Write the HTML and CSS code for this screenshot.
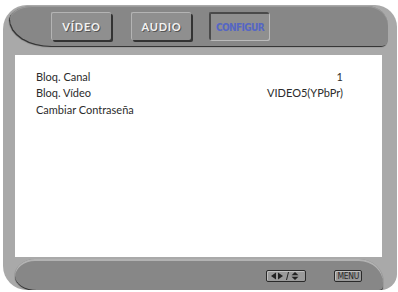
FILE: index.html
```html
<!DOCTYPE html>
<html lang="es">
<head>
  <meta charset="UTF-8">
  <title>Configur</title>
  <link rel="stylesheet" href="styles.css">
</head>
<body>

<div class="tv">
  <div class="topbar">
    <div class="tab">VÍDEO</div>
    <div class="tab">AUDIO</div>
    <div class="tab active">CONFIGUR</div>
  </div>

  <div class="screen">
    <div class="row"><span>Bloq. Canal</span><span>1</span></div>
    <div class="row"><span>Bloq. Vídeo</span><span>VIDEO5(YPbPr)</span></div>
    <div class="row"><span>Cambiar Contraseña</span></div>
  </div>

  <div class="bottombar">
    <div class="key arrows">
      <svg width="30" height="8" viewBox="0 0 30 8">
        <polygon points="0,4 5,0.5 5,7.5" fill="#222"/>
        <polygon points="12,4 7,0.5 7,7.5" fill="#222"/>
        <line x1="15.5" y1="8" x2="17.5" y2="0" stroke="#222" stroke-width="1"/>
        <polygon points="24,0 20.5,3.3 27.5,3.3" fill="#222"/>
        <polygon points="24,8 20.5,4.7 27.5,4.7" fill="#222"/>
      </svg>
    </div>
    <div class="key">MENU</div>
  </div>
</div>

</body>
</html>
```

FILE: styles.css
```css
* {
  margin: 0;
  padding: 0;
  box-sizing: border-box;
}
body {
  background: #fff;
  font-family: Lato, 'Open Sans', sans-serif;
}
.tv {
  margin: 5px 0 0 3px;
  width: 394px;
  height: 285px;
  background: #a9a9a9;
  border-radius: 24px 22px 16px 24px;
  display: flex;
  flex-direction: column;
  padding-top: 1px;
}
.topbar {
  height: 40px;
  margin: 0 9px 0 7px;
  background: #878787;
  border-radius: 24px 22px 6px 44px / 14px 20px 6px 28px;
  box-shadow: -1px 1px 1px #2a2a2a, inset 0 1px 0 #9a9a9a;
  display: flex;
  align-items: center;
  gap: 20px;
  padding-left: 41px;
}
.tab {
  width: 60px;
  height: 28px;
  background: #8f8f8f;
  border-top: 1px solid #b4b4b4;
  border-left: 1px solid #b4b4b4;
  box-shadow: 2px 2px 0 #333;
  border-radius: 2px;
  color: #f2f2f2;
  font-size: 11px;
  font-weight: bold;
  letter-spacing: 0.8px;
  text-shadow: 1px 1px 0 #555;
  display: flex;
  align-items: center;
  justify-content: center;
}
.tab.active {
  margin-left: -2px;
  border-top: 2px solid #4a4a4a;
  border-left: 2px solid #4a4a4a;
  box-shadow: 1px 1px 0 #bbb;
  color: #5566c4;
  font-family: 'DejaVu Sans Condensed', 'DejaVu Sans', sans-serif;
  font-size: 10px;
  letter-spacing: -0.6px;
  text-shadow: none;
}
.screen {
  margin: 9px 15px 2px 12px;
  flex: 1;
  background: #fff;
  padding: 13px 39px 0 21px;
  font-size: 11px;
  color: #2c2c2c;
}
.row {
  height: 16.5px;
  display: flex;
  justify-content: space-between;
  align-items: center;
}
.bottombar {
  height: 31px;
  margin: 0 14px 0 12px;
  background: #878787;
  border-radius: 20px 24px 4px 22px / 16px 22px 4px 14px;
  box-shadow: inset 0 2px 0 #b3b3b3, 0 1px 1px #222;
  display: flex;
  align-items: center;
  justify-content: flex-end;
  gap: 28px;
  padding: 3px 21px 0 0;
}
.key {
  height: 12px;
  border: 1px solid #2a2a2a;
  border-radius: 2px;
  background: #9a9a9a;
  box-shadow: inset 1px 1px 0 #c0c0c0;
  font-family: 'DejaVu Sans Condensed', 'DejaVu Sans', sans-serif;
  font-size: 8.5px;
  letter-spacing: -0.3px;
  color: #2a2a2a;
  display: flex;
  align-items: center;
  padding: 0 2px;
  line-height: 1;
}
.key.arrows {
  width: 40px;
  justify-content: center;
}
```
